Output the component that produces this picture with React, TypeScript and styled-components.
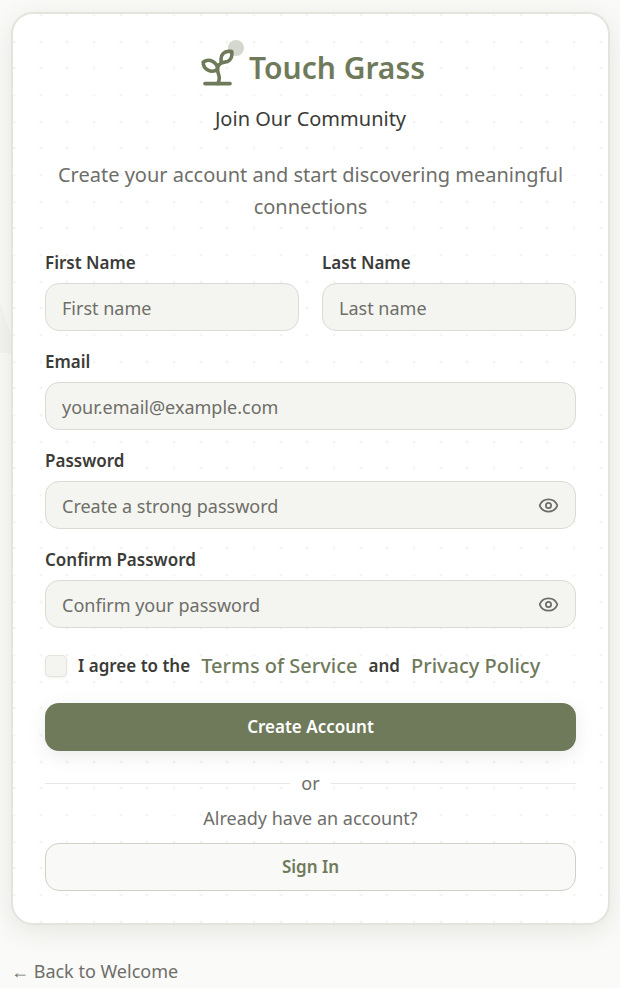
import React, { useState } from "react";
import styled, { createGlobalStyle } from "styled-components";
import { Eye, Sprout } from "lucide-react";

const color = {
  page: "#fafaf8",
  card: "#ffffff",
  border: "#e3e4de",
  fieldBorder: "#dadbd4",
  field: "#f4f5f0",
  moss: "#6f7a5b",
  ink: "#3b3b38",
  muted: "#6e6e69",
};

const offsets = [1, 28, 54];
const dotLayers = offsets
  .flatMap((y) =>
    offsets.map((x) => `radial-gradient(circle at ${x}px ${y}px, #f4f4f2 1px, transparent 2px)`)
  )
  .join(", ");

const GlobalStyle = createGlobalStyle`
  *, *::before, *::after { box-sizing: border-box; }
  body {
    margin: 0;
    background: ${color.page};
    color: ${color.ink};
    font-family: "Segoe UI", "Noto Sans", "Open Sans", sans-serif;
    font-size: 18px;
    line-height: 24px;
  }
  button, input { font: inherit; }
`;

const Page = styled.main`
  position: relative;
  min-height: 100vh;
  overflow: hidden;
  padding: 12px 10px 0 11px;
`;

const Backdrop = styled.svg`
  position: absolute;
  left: -48px;
  top: 232px;
  width: 76px;
  height: 121px;
`;

const Card = styled.section`
  position: relative;
  padding: 32px;
  border: 2px solid ${color.border};
  border-radius: 22px;
  background-color: ${color.card};
  background-image: ${dotLayers};
  background-size: 80px 80px;
  box-shadow: 0 6px 26px rgba(85, 90, 70, 0.13);
`;

const Header = styled.header`
  display: flex;
  flex-direction: column;
  align-items: center;
  text-align: center;
`;

const Brand = styled.div`
  display: flex;
  align-items: center;
  gap: 10px;
  height: 42px;
  color: ${color.moss};
`;

const Logo = styled.span`
  position: relative;
  display: flex;

  &::after {
    content: "";
    position: absolute;
    top: -6px;
    right: -5px;
    width: 16px;
    height: 16px;
    border-radius: 50%;
    background: ${color.moss};
    opacity: 0.3;
  }
`;

const Title = styled.h1`
  margin: 0;
  padding-top: 2px;
  font-size: 30px;
  font-weight: 600;
  line-height: 40px;
`;

const Subtitle = styled.p`
  margin: 15px 0 24px;
  font-size: 20px;
  line-height: 32px;
`;

const Intro = styled.p`
  margin: 0 0 28px;
  color: ${color.muted};
  font-size: 20px;
  line-height: 32px;
`;

const Form = styled.form`
  display: flex;
  flex-direction: column;
  gap: 19px;
`;

const NameRow = styled.div`
  display: grid;
  grid-template-columns: 1fr 1fr;
  gap: 23px;
`;

const FieldGroup = styled.div`
  display: flex;
  flex-direction: column;
  gap: 8px;
  min-width: 0;
`;

const Label = styled.label`
  font-size: 17px;
  font-weight: 600;
`;

const InputShell = styled.div`
  display: flex;
  align-items: center;
  height: 48px;
  padding: 0 16px;
  border: 1px solid ${color.fieldBorder};
  border-radius: 14px;
  background: ${color.field};

  &:focus-within { border-color: ${color.moss}; }
`;

const Input = styled.input`
  flex: 1;
  min-width: 0;
  padding: 2px 0 0;
  border: 0;
  outline: 0;
  background: transparent;
  color: ${color.ink};

  &::placeholder { color: ${color.muted}; opacity: 1; }
`;

const IconButton = styled.button`
  display: flex;
  padding: 0;
  border: 0;
  background: none;
  color: ${color.muted};
  cursor: pointer;
`;

const Agreement = styled.div`
  display: flex;
  flex-wrap: wrap;
  align-items: center;
  gap: 11px;
  min-height: 37px;
`;

const Checkbox = styled.input`
  appearance: none;
  flex: none;
  width: 22px;
  height: 22px;
  margin: 0;
  border: 1px solid ${color.border};
  border-radius: 5px;
  background: ${color.field};
  box-shadow: 0 1px 3px rgba(85, 90, 70, 0.1);

  &:checked { background: ${color.moss}; }
`;

const TextLink = styled.a`
  color: ${color.moss};
  font-size: 20px;
  font-weight: 500;
  text-decoration: none;
`;

const Button = styled.button<{ $primary?: boolean }>`
  width: 100%;
  height: 48px;
  border: ${(p) => (p.$primary ? "0" : "1px solid #cfd1c6")};
  border-radius: 14px;
  background: ${(p) => (p.$primary ? color.moss : "#f9f9f7")};
  color: ${(p) => (p.$primary ? "#ffffff" : color.moss)};
  font-size: 17px;
  font-weight: 600;
  box-shadow: ${(p) => (p.$primary ? "0 5px 18px rgba(85, 90, 70, 0.12)" : "none")};
  cursor: pointer;
`;

const Divider = styled.div`
  display: flex;
  align-items: center;
  gap: 11px;
  margin: 20px 0 11px;
  color: ${color.muted};

  &::before, &::after {
    content: "";
    flex: 1;
    height: 1px;
    background: #e6e7e3;
  }
`;

const Prompt = styled.p`
  margin: 0 0 13px;
  color: ${color.muted};
  text-align: center;
`;

const BackLink = styled.a`
  display: inline-block;
  margin-top: 34px;
  color: ${color.muted};
  text-decoration: none;
`;

type FieldProps = { id: string; label: string; placeholder: string; type?: string };

function Field({ id, label, placeholder, type = "text" }: FieldProps) {
  const [visible, setVisible] = useState(false);
  const secret = type === "password";
  return (
    <FieldGroup>
      <Label htmlFor={id}>{label}</Label>
      <InputShell>
        <Input id={id} type={secret && visible ? "text" : type} placeholder={placeholder} />
        {secret && (
          <IconButton type="button" aria-label="Toggle password visibility" onClick={() => setVisible(!visible)}>
            <Eye size={21} />
          </IconButton>
        )}
      </InputShell>
    </FieldGroup>
  );
}

export default function App() {
  return (
    <>
      <GlobalStyle />
      <Page>
        <Backdrop viewBox="0 0 76 121" aria-hidden="true">
          <path d="M25 0 L65 121 H0 V0Z" fill="#f4f4f1" />
        </Backdrop>
        <Card>
          <Header>
            <Brand>
              <Logo>
                <Sprout size={43} />
              </Logo>
              <Title>Touch Grass</Title>
            </Brand>
            <Subtitle>Join Our Community</Subtitle>
            <Intro>Create your account and start discovering meaningful connections</Intro>
          </Header>
          <Form onSubmit={(e) => e.preventDefault()}>
            <NameRow>
              <Field id="first" label="First Name" placeholder="First name" />
              <Field id="last" label="Last Name" placeholder="Last name" />
            </NameRow>
            <Field id="email" label="Email" placeholder="your.email@example.com" type="email" />
            <Field id="password" label="Password" placeholder="Create a strong password" type="password" />
            <Field id="confirm" label="Confirm Password" placeholder="Confirm your password" type="password" />
            <Agreement>
              <Checkbox id="agree" type="checkbox" />
              <Label htmlFor="agree">I agree to the</Label>
              <TextLink href="#terms">Terms of Service</TextLink>
              <Label htmlFor="agree">and</Label>
              <TextLink href="#privacy">Privacy Policy</TextLink>
            </Agreement>
            <Button $primary type="submit">Create Account</Button>
          </Form>
          <Divider>or</Divider>
          <Prompt>Already have an account?</Prompt>
          <Button type="button">Sign In</Button>
        </Card>
        <BackLink href="#welcome">← Back to Welcome</BackLink>
      </Page>
    </>
  );
}
